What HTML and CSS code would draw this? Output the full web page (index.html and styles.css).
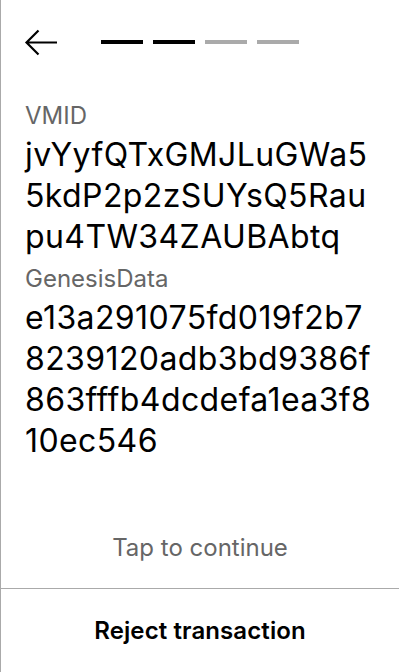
FILE: index.html
```html
<!DOCTYPE html>
<html>
<head>
<meta charset="utf-8">
<link rel="stylesheet" href="styles.css">
</head>
<body>
<div class="screen">
  <header class="top">
    <svg class="back" width="34" height="28" viewBox="0 0 34 28">
      <path d="M33 13.5H2.5M14.5 1.5L2.5 13.5L14.5 25.5" fill="none" stroke="#000" stroke-width="2.2"/>
    </svg>
    <div class="steps">
      <span class="step on"></span>
      <span class="step on"></span>
      <span class="step"></span>
      <span class="step"></span>
    </div>
  </header>
  <main class="content">
    <div class="label">VMID</div>
    <div class="value">jvYyfQTxGMJLuGWa55kdP2p2zSUYsQ5Raupu4TW34ZAUBAbtq</div>
    <div class="label">GenesisData</div>
    <div class="value">e13a291075fd019f2b78239120adb3bd9386f863fffb4dcdefa1ea3f810ec546</div>
  </main>
  <div class="tap">Tap to continue</div>
  <footer class="reject">Reject transaction</footer>
</div>
</body>
</html>
```
FILE: styles.css
```css
html, body {
  margin: 0;
  padding: 0;
  background: #fff;
}
body {
  font-family: Inter, "Noto Sans", sans-serif;
  color: #000;
}
.screen {
  width: 399px;
  height: 672px;
  border-left: 1px solid #aaa;
  display: flex;
  flex-direction: column;
  box-sizing: border-box;
}
.top {
  display: flex;
  align-items: center;
  height: 28px;
  padding: 29px 0 0 23px;
}
.back {
  display: block;
}
.steps {
  display: flex;
  gap: 10px;
  margin-left: 43px;
  margin-top: -2px;
}
.step {
  width: 42px;
  height: 4px;
  background: #aaa;
}
.step.on {
  background: #000;
}
.content {
  padding: 0 24px;
  margin-top: 40px;
  flex: 1;
}
.label {
  font-size: 24px;
  line-height: 37px;
  color: #666;
}
.value + .label {
  margin-top: 3px;
}
.value {
  font-size: 32px;
  line-height: 41px;
  letter-spacing: 0.4px;
  word-break: break-all;
}
.tap {
  text-align: center;
  font-size: 24px;
  color: #666;
  line-height: 30px;
  padding-bottom: 25px;
}
.reject {
  border-top: 1px solid #aaa;
  height: 83px;
  display: flex;
  align-items: center;
  justify-content: center;
  font-size: 24px;
  font-weight: 600;
  letter-spacing: 0.1px;
}
```
